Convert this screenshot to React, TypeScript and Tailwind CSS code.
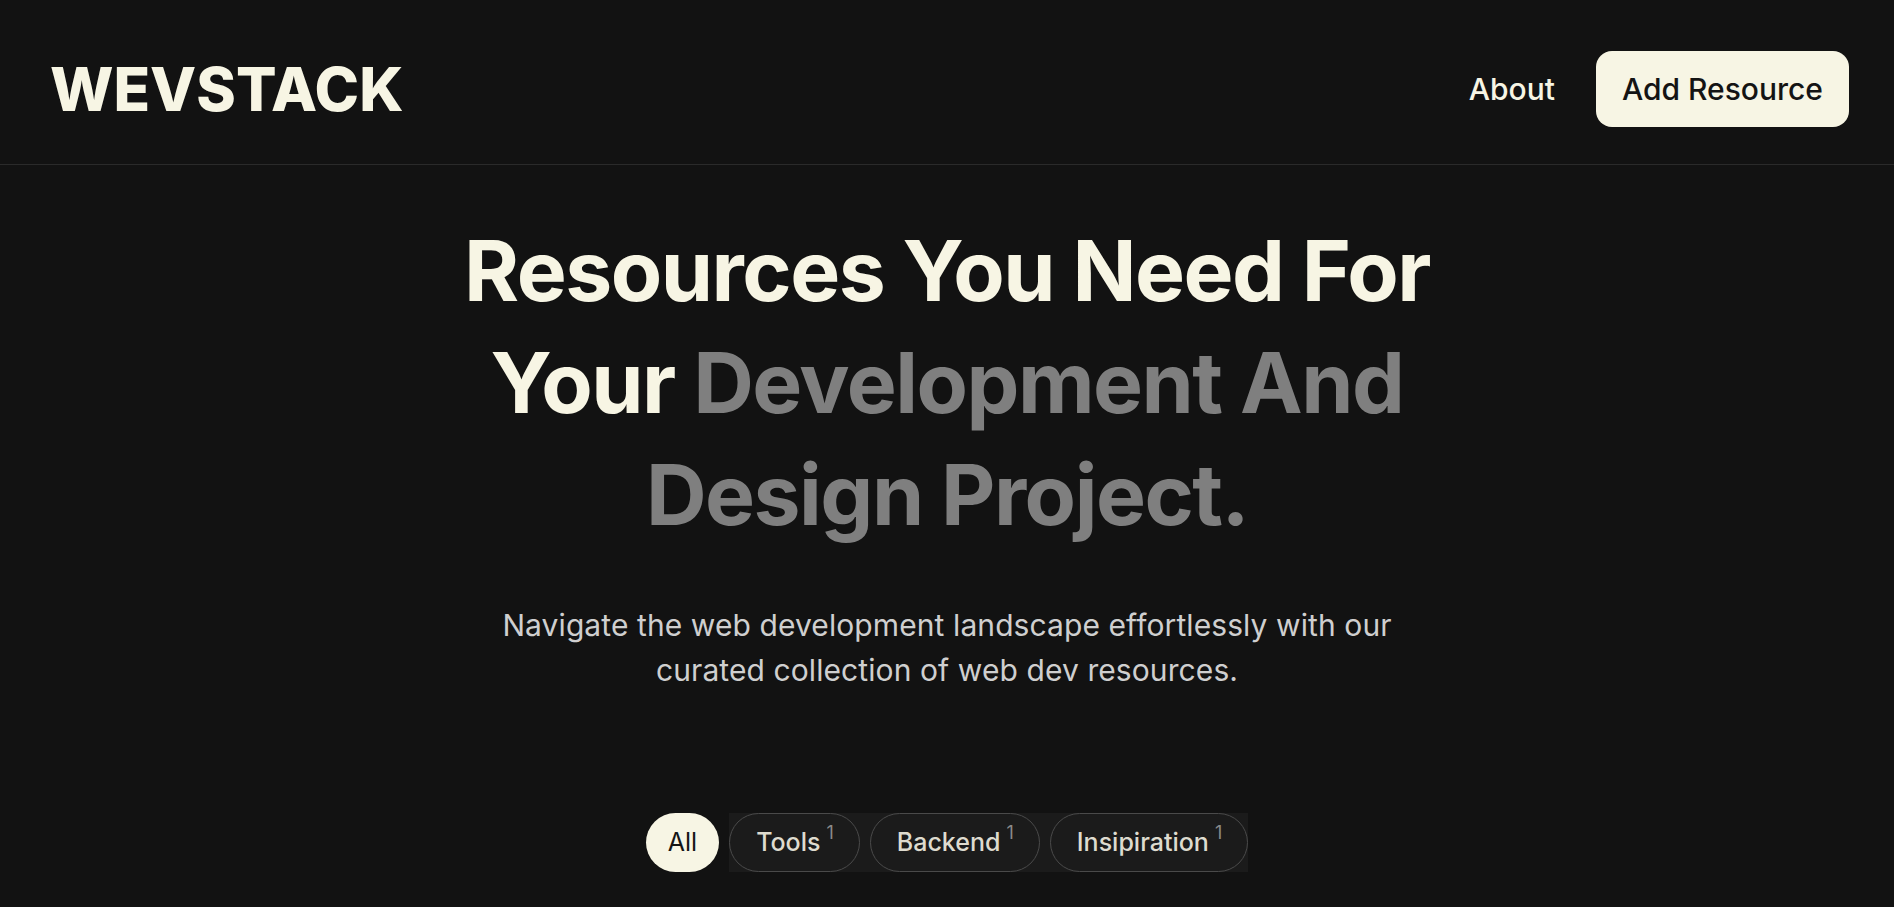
import React from "react";

const categories = [
  { name: "Tools", count: 1 },
  { name: "Backend", count: 1 },
  { name: "Insipiration", count: 1 },
];

const Navbar = () => {
  return (
    <nav className="h-[165px] pt-[14px] pl-[50px] pr-[45px] flex items-center justify-between border-b border-[#2a2a2a]">
      <a href="/">
        <h1 className="text-[60px] leading-none font-extrabold text-[#f7f5e4]">
          WEVSTACK
        </h1>
      </a>

      <div className="flex items-center gap-[41px]">
        <a href="/about" className="text-[30px] font-medium text-[#f7f5e4]">
          About
        </a>
        <button className="h-[76px] px-[26px] rounded-2xl bg-[#f7f5e4] text-[30px] font-medium text-[#141414]">
          Add Resource
        </button>
      </div>
    </nav>
  );
};

const Hero = () => {
  return (
    <section className="flex flex-col items-center text-center">
      <h2 className="mt-[50px] max-w-[1040px] text-[84px] leading-[112px] font-bold tracking-[-0.018em] text-[#f7f5e4]">
        Resources You Need For Your{" "}
        <span className="text-[#7f7f7f]">Development And Design Project.</span>
      </h2>

      <p className="mt-[52px] max-w-[920px] text-[30px] leading-[45px] tracking-[0.003em] text-[#cfcfcf]">
        Navigate the web development landscape effortlessly with our curated
        collection of web dev resources.
      </p>

      <div className="mt-[120px] flex items-center gap-[10px]">
        <button className="h-[59px] px-[22px] rounded-full bg-[#f7f5e4] text-[25px] text-[#141414]">
          All
        </button>
        <div className="flex items-center gap-[10px] bg-[#1b1b1b]">
          {categories.map((c) => (
            <button
              key={c.name}
              className="h-[59px] pl-[26px] pr-[25px] rounded-full border border-[#4a4a4a] flex items-center text-[25px] font-medium text-[#dedbcf]"
            >
              {c.name}
              <span className="self-start mt-[10px] ml-[6px] text-[18px] leading-none font-normal text-[#8a8a8a]">
                {c.count}
              </span>
            </button>
          ))}
        </div>
      </div>
    </section>
  );
};

export default function App() {
  return (
    <div
      className="min-h-screen bg-[#121212]"
      style={{ fontFamily: "Inter, 'Noto Sans', sans-serif" }}
    >
      <Navbar />
      <Hero />
    </div>
  );
}
